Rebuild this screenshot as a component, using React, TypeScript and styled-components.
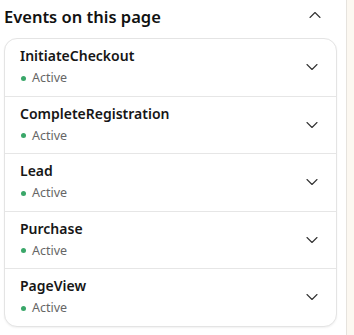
import React from "react";
import styled, { createGlobalStyle } from "styled-components";

const GlobalStyle = createGlobalStyle`
  html, body {
    margin: 0;
    padding: 0;
    background: #ffffff;
  }
  body {
    font-family: "Noto Sans", "Open Sans", sans-serif;
    color: #1b1b1b;
  }
`;

const events = [
  "InitiateCheckout",
  "CompleteRegistration",
  "Lead",
  "Purchase",
  "PageView",
];

const Chevron: React.FC<{ up?: boolean }> = ({ up }) => (
  <svg width="14" height="14" viewBox="0 0 14 14" fill="none">
    <path
      d={up ? "M2 9.5L7 4.5L12 9.5" : "M2 4.5L7 9.5L12 4.5"}
      stroke="#333"
      strokeWidth="1.1"
      strokeLinecap="round"
      strokeLinejoin="round"
    />
  </svg>
);

export default function App() {
  return (
    <>
      <GlobalStyle />
      <Page>
        <Panel>
          <Header>
            <Title>Events on this page</Title>
            <HeaderToggle>
              <Chevron up />
            </HeaderToggle>
          </Header>
          <Card>
            {events.map((name) => (
              <Row key={name}>
                <RowText>
                  <EventName>{name}</EventName>
                  <Status>
                    <Dot />
                    Active
                  </Status>
                </RowText>
                <Chevron />
              </Row>
            ))}
          </Card>
        </Panel>
        <Edge />
      </Page>
    </>
  );
}

const Page = styled.div`
  display: flex;
  width: 354px;
  height: 335px;
  overflow: hidden;
`;

const Panel = styled.div`
  flex: 1;
  padding: 0 9px 0 4px;
  background: #ffffff;
`;

const Edge = styled.div`
  width: 7px;
  border-left: 1px solid #e6e3de;
  background: #fcf8f1;
`;

const Header = styled.div`
  display: flex;
  align-items: center;
  justify-content: space-between;
  height: 32px;
  padding-right: 15px;
`;

const Title = styled.h2`
  margin: 0;
  font-size: 16.5px;
  font-weight: 600;
  color: #111;
`;

const HeaderToggle = styled.div`
  display: flex;
  margin-top: -2px;
`;

const Card = styled.div`
  margin-top: 6px;
  border: 1px solid #e4e4e4;
  border-radius: 13px;
  background: #fff;
  box-shadow: 0 1px 2px rgba(0, 0, 0, 0.06);
  overflow: hidden;
`;

const Row = styled.div`
  display: flex;
  align-items: center;
  justify-content: space-between;
  height: 56.5px;
  padding: 0 17px 0 15px;
  & + & {
    border-top: 1px solid #e6e6e6;
  }
`;

const RowText = styled.div`
  display: flex;
  flex-direction: column;
  gap: 3px;
  margin-top: -1px;
`;

const EventName = styled.div`
  font-size: 14px;
  font-weight: 600;
  color: #161616;
  line-height: 20px;
`;

const Status = styled.div`
  display: flex;
  align-items: center;
  gap: 6px;
  font-size: 12.5px;
  color: #666;
  line-height: 18px;
`;

const Dot = styled.span`
  width: 5px;
  height: 5px;
  border-radius: 50%;
  background: #3aa769;
  margin-left: 1px;
`;
